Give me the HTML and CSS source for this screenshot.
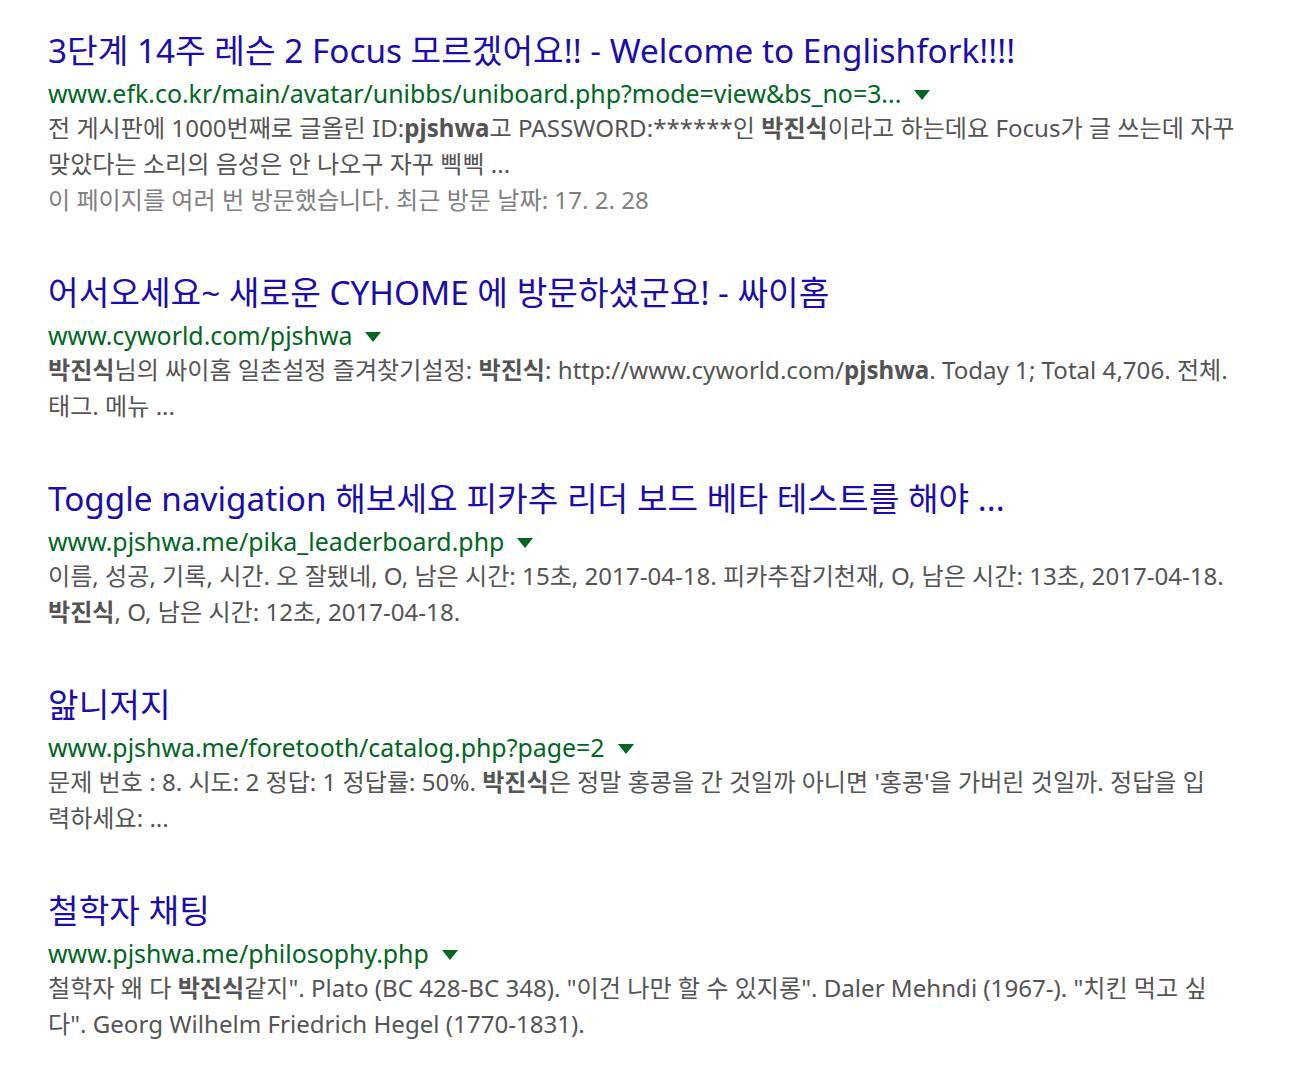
FILE: index.html
```html
<!DOCTYPE html>
<html lang="ko">
<head>
<meta charset="utf-8">
<title>검색 결과</title>
<link rel="stylesheet" href="styles.css">
</head>
<body>
<main class="results">
  <div class="result">
    <h3 class="title"><a href="#">3단계 14주 레슨 2 Focus 모르겠어요!! - Welcome to Englishfork!!!!</a></h3>
    <div class="url"><cite>www.efk.co.kr/main/avatar/unibbs/uniboard.php?mode=view&amp;bs_no=3...</cite><span class="arrow"></span></div>
    <div class="snippet">
      <div class="line">전 게시판에 1000번째로 글올린 ID:<b>pjshwa</b>고 PASSWORD:******인 <b>박진식</b>이라고 하는데요 Focus가 글 쓰는데 자꾸</div>
      <div class="line">맞았다는 소리의 음성은 안 나오구 자꾸 삑삑 ...</div>
      <div class="line visited">이 페이지를 여러 번 방문했습니다. 최근 방문 날짜: 17. 2. 28</div>
    </div>
  </div>

  <div class="result">
    <h3 class="title"><a href="#">어서오세요~ 새로운 CYHOME 에 방문하셨군요! - 싸이홈</a></h3>
    <div class="url"><cite>www.cyworld.com/pjshwa</cite><span class="arrow"></span></div>
    <div class="snippet">
      <div class="line"><b>박진식</b>님의 싸이홈 일촌설정 즐겨찾기설정: <b>박진식</b>: http://www.cyworld.com/<b>pjshwa</b>. Today 1; Total 4,706. 전체.</div>
      <div class="line">태그. 메뉴 ...</div>
    </div>
  </div>

  <div class="result">
    <h3 class="title"><a href="#">Toggle navigation 해보세요 피카추 리더 보드 베타 테스트를 해야 ...</a></h3>
    <div class="url"><cite>www.pjshwa.me/pika_leaderboard.php</cite><span class="arrow"></span></div>
    <div class="snippet">
      <div class="line">이름, 성공, 기록, 시간. 오 잘됐네, O, 남은 시간: 15초, 2017-04-18. 피카추잡기천재, O, 남은 시간: 13초, 2017-04-18.</div>
      <div class="line"><b>박진식</b>, O, 남은 시간: 12초, 2017-04-18.</div>
    </div>
  </div>

  <div class="result">
    <h3 class="title"><a href="#">앒니저지</a></h3>
    <div class="url"><cite>www.pjshwa.me/foretooth/catalog.php?page=2</cite><span class="arrow"></span></div>
    <div class="snippet">
      <div class="line">문제 번호 : 8. 시도: 2 정답: 1 정답률: 50%. <b>박진식</b>은 정말 홍콩을 간 것일까 아니면 '홍콩'을 가버린 것일까. 정답을 입</div>
      <div class="line">력하세요: ...</div>
    </div>
  </div>

  <div class="result">
    <h3 class="title"><a href="#">철학자 채팅</a></h3>
    <div class="url"><cite>www.pjshwa.me/philosophy.php</cite><span class="arrow"></span></div>
    <div class="snippet">
      <div class="line">철학자 왜 다 <b>박진식</b>같지". Plato (BC 428-BC 348). "이건 나만 할 수 있지롱". Daler Mehndi (1967-). "치킨 먹고 싶</div>
      <div class="line">다". Georg Wilhelm Friedrich Hegel (1770-1831).</div>
    </div>
  </div>
</main>
</body>
</html>
```

FILE: styles.css
```css
html, body {
  margin: 0;
  padding: 0;
  background: #ffffff;
}

body {
  font-family: "Noto Sans", "Noto Sans CJK KR", sans-serif;
}

.results {
  padding: 28px 0 0 48px;
  display: flex;
  flex-direction: column;
  gap: 52px;
}

.result {
  display: flex;
  flex-direction: column;
}

.title {
  margin: 0;
  font-size: 33.3px;
  font-weight: normal;
  line-height: 44px;
  white-space: nowrap;
}

.title a {
  color: #1a0dab;
  text-decoration: none;
}

.url {
  margin-top: 4px;
  height: 34px;
  line-height: 34px;
  font-size: 24.9px;
  color: #006621;
  white-space: nowrap;
  display: flex;
  align-items: center;
}

.url cite {
  font-style: normal;
}

.arrow {
  width: 0;
  height: 0;
  margin-left: 13px;
  margin-top: 4px;
  border-left: 8px solid transparent;
  border-right: 8px solid transparent;
  border-top: 10px solid #006621;
}

.snippet {
  font-size: 24.1px;
  line-height: 36px;
  color: #545454;
}

.line {
  white-space: nowrap;
}

.snippet b {
  font-weight: bold;
  color: #545454;
}

.visited {
  color: #808080;
}
```
